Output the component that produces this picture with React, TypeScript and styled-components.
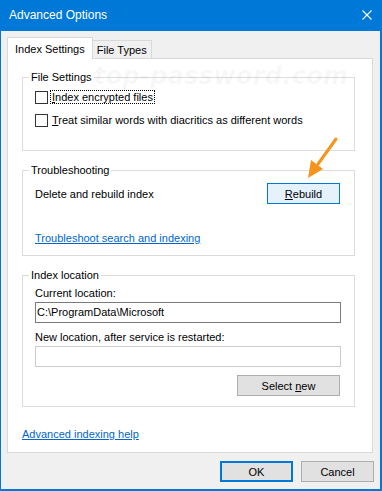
import React from "react";
import styled, { createGlobalStyle } from "styled-components";

const GlobalStyle = createGlobalStyle`
  html, body { margin: 0; padding: 0; background: #ffffff; }
  #root { width: 382px; height: 491px; }
  * { box-sizing: border-box; }
`;

const FONT = `"Liberation Sans", Arial, sans-serif`;

const Window = styled.div`
  position: relative;
  width: 382px;
  height: 491px;
  display: flex;
  flex-direction: column;
  background: #f0f0f0;
  border-style: solid;
  border-color: #0078d7;
  border-width: 0 2px 2px 1px;
  font-family: ${FONT};
  font-size: 11px;
  color: #000;
  overflow: hidden;
`;

const TitleBar = styled.div`
  height: 31px;
  flex: 0 0 31px;
  background: #0078d7;
  color: #fff;
  display: flex;
  align-items: center;
  justify-content: space-between;
  padding: 0 8px 0 8px;
  font-size: 12px;
`;

const TitleText = styled.span`
  line-height: 16px;
  margin-top: -1px;
`;

const CloseIcon = styled.svg`
  width: 10px;
  height: 10px;
  display: block;
  margin-top: -1px;
`;

const Body = styled.div`
  flex: 1;
  display: flex;
  flex-direction: column;
  padding: 6px 0 0 6px;
`;

const TabRow = styled.div`
  display: flex;
  align-items: flex-end;
  height: 21px;
`;

const Tab = styled.div<{ $active?: boolean }>`
  position: relative;
  z-index: ${(p) => (p.$active ? 2 : 1)};
  height: ${(p) => (p.$active ? "22px" : "18px")};
  margin-bottom: ${(p) => (p.$active ? "-1px" : "0")};
  margin-left: ${(p) => (p.$active ? "0" : "-1px")};
  padding: ${(p) => (p.$active ? "4px 7px 0 7px" : "2px 4px 0 4px")};
  border: 1px solid #d9d9d9;
  border-bottom: none;
  background: ${(p) => (p.$active ? "#ffffff" : "#f0f0f0")};
  line-height: 14px;
  white-space: nowrap;
`;

const Panel = styled.div`
  height: 395px;
  margin-right: 7px;
  border: 1px solid #d9d9d9;
  background: #ffffff;
  display: flex;
  flex-direction: column;
  padding: 10px 17px 0 14px;
`;

const Group = styled.fieldset<{ $pad: string; $mt?: number }>`
  margin: ${(p) => p.$mt ?? 0}px 0 0 0;
  border: 1px solid #dcdcdc;
  padding: ${(p) => p.$pad};
  display: flex;
  flex-direction: column;
  min-width: 0;
`;

const Legend = styled.legend`
  margin-left: -6px;
  padding: 0 2px;
  line-height: 16px;
  height: 16px;
`;

const CheckRow = styled.label<{ $mt?: number }>`
  display: flex;
  align-items: center;
  height: 16px;
  margin-top: ${(p) => p.$mt ?? 0}px;
`;

const CheckBox = styled.span`
  width: 13px;
  height: 13px;
  border: 1px solid #333333;
  background: #fff;
  flex: 0 0 13px;
  margin-right: 2px;
`;

const CheckLabel = styled.span<{ $focus?: boolean }>`
  border: 1px ${(p) => (p.$focus ? "dotted #000" : "solid transparent")};
  padding: 0 1px 0 1px;
  line-height: 12px;
  white-space: nowrap;
`;

const ActionRow = styled.div`
  display: flex;
  align-items: center;
  justify-content: space-between;
  height: 21px;
  padding-right: 1px;
`;

const Text = styled.div<{ $mt?: number }>`
  line-height: 16px;
  margin-top: ${(p) => p.$mt ?? 0}px;
  white-space: nowrap;
`;

const Link = styled.a<{ $mt?: number }>`
  display: block;
  line-height: 16px;
  color: #0066cc;
  text-decoration: underline;
  margin-top: ${(p) => p.$mt ?? 0}px;
  white-space: nowrap;
  align-self: flex-start;
  cursor: pointer;
`;

const Button = styled.button<{ $variant?: "default" | "hover" | "normal"; $w?: number }>`
  width: ${(p) => p.$w ?? 73}px;
  height: 21px;
  padding: 0;
  font-family: ${FONT};
  font-size: 11px;
  color: #000;
  background: ${(p) => (p.$variant === "hover" ? "#e5f1fb" : "#e1e1e1")};
  border: ${(p) =>
    p.$variant === "default"
      ? "2px solid #0078d7"
      : p.$variant === "hover"
      ? "1px solid #0078d7"
      : "1px solid #adadad"};
  border-radius: 0;
  line-height: 16px;
`;

const Input = styled.div<{ $disabled?: boolean; $mt?: number }>`
  height: 21px;
  margin-top: ${(p) => p.$mt ?? 0}px;
  border: 1px solid ${(p) => (p.$disabled ? "#cccccc" : "#7a7a7a")};
  background: #fff;
  padding: 0 1px;
  line-height: 19px;
  white-space: nowrap;
`;

const RightRow = styled.div<{ $mt?: number }>`
  display: flex;
  justify-content: flex-end;
  margin-top: ${(p) => p.$mt ?? 0}px;
  padding-right: 1px;
`;

const Footer = styled.div`
  display: flex;
  justify-content: flex-end;
  gap: 8px;
  padding: 8px 6px 0 0;
`;

const Watermark = styled.div`
  position: absolute;
  left: 93px;
  top: 62px;
  font-family: "DejaVu Sans", sans-serif;
  font-weight: bold;
  font-style: italic;
  font-size: 24px;
  letter-spacing: 0.3px;
  color: rgba(0, 0, 0, 0.04);
  pointer-events: none;
  white-space: nowrap;
`;

const Arrow = styled.svg`
  position: absolute;
  left: 0;
  top: 0;
  pointer-events: none;
`;

export default function App() {
  return (
    <>
      <GlobalStyle />
      <Window>
        <TitleBar>
          <TitleText>Advanced Options</TitleText>
          <CloseIcon viewBox="0 0 10 10">
            <path d="M0.5 0.5 L9.5 9.5 M9.5 0.5 L0.5 9.5" stroke="#fff" strokeWidth="1.1" />
          </CloseIcon>
        </TitleBar>
        <Body>
          <TabRow>
            <Tab $active>Index Settings</Tab>
            <Tab>File Types</Tab>
          </TabRow>
          <Panel>
            <Group $pad="4px 12px 22px 12px">
              <Legend>File Settings</Legend>
              <CheckRow>
                <CheckBox />
                <CheckLabel $focus>
                  <u>I</u>ndex encrypted files
                </CheckLabel>
              </CheckRow>
              <CheckRow $mt={7}>
                <CheckBox />
                <CheckLabel>
                  <u>T</u>reat similar words with diacritics as different words
                </CheckLabel>
              </CheckRow>
            </Group>
            <Group $pad="5px 13px 9px 12px" $mt={11}>
              <Legend>Troubleshooting</Legend>
              <ActionRow>
                <Text>Delete and rebuild index</Text>
                <Button $variant="hover">
                  <u>R</u>ebuild
                </Button>
              </ActionRow>
              <Link $mt={26}>Troubleshoot search and indexing</Link>
            </Group>
            <Group $pad="2px 13px 10px 12px" $mt={11}>
              <Legend>Index location</Legend>
              <Text>Current location:</Text>
              <Input $mt={1}>C:\ProgramData\Microsoft</Input>
              <Text $mt={6}>New location, after service is restarted:</Text>
              <Input $mt={1} $disabled />
              <RightRow $mt={8}>
                <Button $w={103}>
                  Select <u>n</u>ew
                </Button>
              </RightRow>
            </Group>
            <Link $mt={19}>Advanced indexing help</Link>
          </Panel>
          <Footer>
            <Button $variant="default">OK</Button>
            <Button>Cancel</Button>
          </Footer>
        </Body>
        <Watermark>top-password.com</Watermark>
        <Arrow width="382" height="491" viewBox="0 0 382 491">
          <line x1="335" y1="139" x2="317" y2="164" stroke="#f7941d" strokeWidth="3" strokeLinecap="round" />
          <polygon points="307,178 310,160 322,169" fill="#f7941d" />
        </Arrow>
      </Window>
    </>
  );
}
